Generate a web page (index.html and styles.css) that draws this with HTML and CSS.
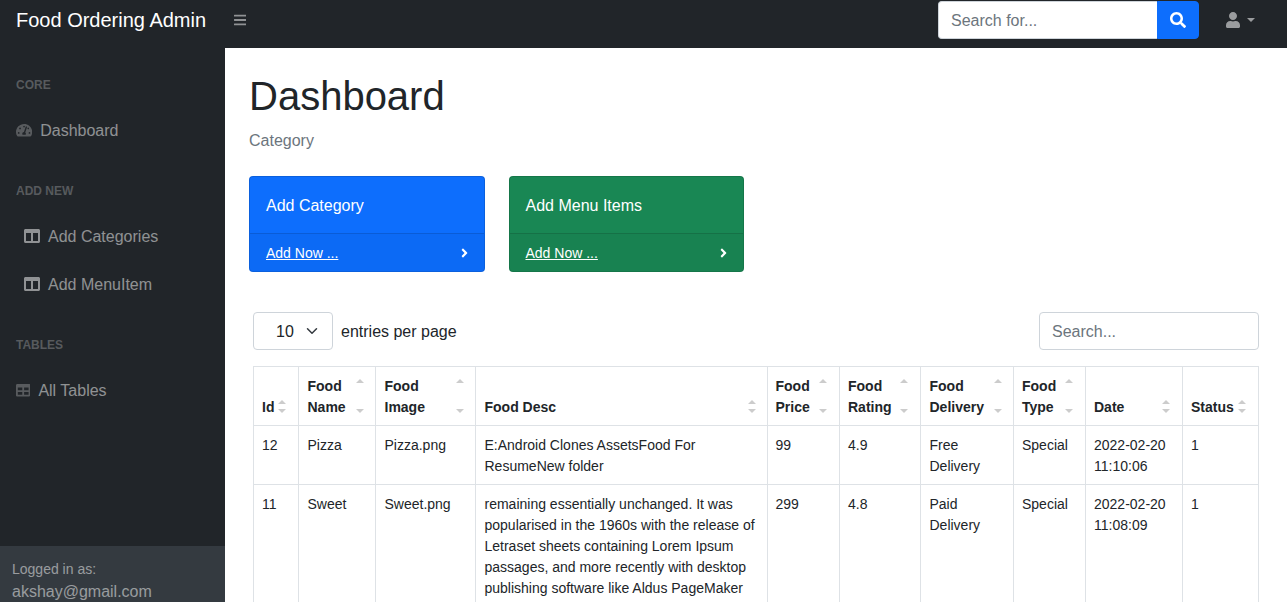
FILE: index.html
```html
<!DOCTYPE html>
<html lang="en">
<head>
<meta charset="utf-8">
<title>Dashboard - Food Ordering Admin</title>
<link rel="stylesheet" href="styles.css">
</head>
<body>
<nav class="topbar">
  <a class="brand" href="#">Food Ordering Admin</a>
  <button class="toggle" type="button" aria-label="Toggle sidebar">
    <svg class="ic-bars" viewBox="0 0 448 512"><path fill="currentColor" d="M16 132h416c8.837 0 16-7.163 16-16V76c0-8.837-7.163-16-16-16H16C7.163 60 0 67.163 0 76v40c0 8.837 7.163 16 16 16zm0 160h416c8.837 0 16-7.163 16-16v-40c0-8.837-7.163-16-16-16H16c-8.837 0-16 7.163-16 16v40c0 8.837 7.163 16 16 16zm0 160h416c8.837 0 16-7.163 16-16v-40c0-8.837-7.163-16-16-16H16c-8.837 0-16 7.163-16 16v40c0 8.837 7.163 16 16 16z"/></svg>
  </button>
  <form class="top-search">
    <input class="top-input" type="text" placeholder="Search for...">
    <button class="top-btn" type="button" aria-label="Search">
      <svg class="ic-search" viewBox="0 0 512 512"><path fill="currentColor" d="M505 442.7L405.3 343c-4.5-4.5-10.6-7-17-7H372c27.6-35.3 44-79.7 44-128C416 93.1 322.9 0 208 0S0 93.1 0 208s93.1 208 208 208c48.3 0 92.7-16.4 128-44v16.3c0 6.4 2.5 12.5 7 17l99.7 99.7c9.4 9.4 24.6 9.4 33.9 0l28.3-28.3c9.4-9.4 9.4-24.6.1-34zM208 336c-70.7 0-128-57.2-128-128 0-70.7 57.2-128 128-128 70.7 0 128 57.2 128 128 0 70.7-57.2 128-128 128z"/></svg>
    </button>
  </form>
  <a class="user" href="#" aria-label="User menu">
    <svg class="ic-user" viewBox="0 0 448 512"><path fill="currentColor" d="M224 256c70.7 0 128-57.3 128-128S294.7 0 224 0 96 57.3 96 128s57.3 128 128 128zm89.6 32h-16.7c-22.2 10.2-46.9 16-72.9 16s-50.6-5.8-72.9-16h-16.7C60.2 288 0 348.2 0 422.4V464c0 26.5 21.5 48 48 48h352c26.5 0 48-21.5 48-48v-41.6c0-74.2-60.2-134.4-134.4-134.4z"/></svg>
    <span class="caret"></span>
  </a>
</nav>
<div class="layout">
  <aside class="sidebar">
    <div class="menu">
      <div class="menu-heading">Core</div>
      <a class="menu-link" href="#">
        <svg class="ic-gauge" viewBox="0 0 576 512"><path fill="currentColor" d="M288 32C128.94 32 0 160.94 0 320c0 52.8 14.25 102.26 39.06 144.8 5.61 9.62 16.3 15.2 27.44 15.2h443c11.14 0 21.83-5.58 27.44-15.2C561.75 422.26 576 372.8 576 320c0-159.06-128.94-288-288-288zm0 64c14.71 0 26.58 10.13 30.32 23.65-1.11 2.26-2.64 4.23-3.45 6.67l-9.22 27.67c-5.13 3.49-10.97 6.01-17.64 6.01-17.67 0-32-14.33-32-32S270.33 96 288 96zM96 384c-17.67 0-32-14.33-32-32s14.33-32 32-32 32 14.33 32 32-14.33 32-32 32zm48-160c-17.67 0-32-14.33-32-32s14.33-32 32-32 32 14.33 32 32-14.33 32-32 32zm246.77-72.41l-61.33 184C343.13 347.33 352 364.54 352 384c0 11.72-3.38 22.55-8.88 32H232.88c-5.5-9.45-8.88-20.28-8.88-32 0-33.94 26.5-61.43 59.9-63.59l61.34-184.01c4.17-12.56 17.73-19.45 30.36-15.17 12.57 4.19 19.35 17.79 15.17 30.36zm14.66 57.2l15.52-46.55c3.47-1.29 7.13-2.23 11.05-2.23 17.67 0 32 14.33 32 32s-14.33 32-32 32c-11.38-.01-20.89-6.28-26.57-15.22zM480 384c-17.67 0-32-14.33-32-32s14.33-32 32-32 32 14.33 32 32-14.33 32-32 32z"/></svg>
        Dashboard
      </a>
      <div class="menu-heading">Add New</div>
      <a class="menu-link menu-sub" href="#">
        <svg class="ic-columns" viewBox="0 0 512 512"><path fill="currentColor" d="M464 32H48C21.49 32 0 53.49 0 80v352c0 26.51 21.49 48 48 48h416c26.51 0 48-21.49 48-48V80c0-26.51-21.49-48-48-48zM224 416H64V160h160v256zm224 0H288V160h160v256z"/></svg>
        Add Categories
      </a>
      <a class="menu-link menu-sub" href="#">
        <svg class="ic-columns" viewBox="0 0 512 512"><path fill="currentColor" d="M464 32H48C21.49 32 0 53.49 0 80v352c0 26.51 21.49 48 48 48h416c26.51 0 48-21.49 48-48V80c0-26.51-21.49-48-48-48zM224 416H64V160h160v256zm224 0H288V160h160v256z"/></svg>
        Add MenuItem
      </a>
      <div class="menu-heading">Tables</div>
      <a class="menu-link" href="#">
        <svg class="ic-table" viewBox="0 0 512 512"><path fill="currentColor" d="M464 32H48C21.49 32 0 53.49 0 80v352c0 26.51 21.49 48 48 48h416c26.51 0 48-21.49 48-48V80c0-26.51-21.49-48-48-48zM224 416H64v-96h160v96zm0-160H64v-96h160v96zm224 160H288v-96h160v96zm0-160H288v-96h160v96z"/></svg>
        All Tables
      </a>
    </div>
    <div class="side-footer">
      <div class="side-small">Logged in as:</div>
      <div>akshay@gmail.com</div>
    </div>
  </aside>
  <main class="content">
    <h1 class="title">Dashboard</h1>
    <div class="crumb">Category</div>
    <div class="cards">
      <div class="card card-blue">
        <div class="card-body">Add Category</div>
        <div class="card-foot">
          <a class="card-link" href="#">Add Now ...</a>
          <svg class="ic-angle" viewBox="0 0 256 512"><path fill="currentColor" d="M224.3 273l-136 136c-9.4 9.4-24.6 9.4-33.9 0l-22.6-22.6c-9.4-9.4-9.4-24.6 0-33.9l96.4-96.4-96.4-96.4c-9.4-9.4-9.4-24.6 0-33.9L54.3 103c9.4-9.4 24.6-9.4 33.9 0l136 136c9.5 9.4 9.5 24.6.1 34z"/></svg>
        </div>
      </div>
      <div class="card card-green">
        <div class="card-body">Add Menu Items</div>
        <div class="card-foot">
          <a class="card-link" href="#">Add Now ...</a>
          <svg class="ic-angle" viewBox="0 0 256 512"><path fill="currentColor" d="M224.3 273l-136 136c-9.4 9.4-24.6 9.4-33.9 0l-22.6-22.6c-9.4-9.4-9.4-24.6 0-33.9l96.4-96.4-96.4-96.4c-9.4-9.4-9.4-24.6 0-33.9L54.3 103c9.4-9.4 24.6-9.4 33.9 0l136 136c9.5 9.4 9.5 24.6.1 34z"/></svg>
        </div>
      </div>
    </div>
    <section class="datatable">
      <div class="dt-top">
        <div class="dt-length">
          <div class="dt-select">
            <span class="dt-text">10</span>
            <svg class="ic-chevron" viewBox="0 0 16 16"><path fill="none" stroke="currentColor" stroke-width="2" stroke-linecap="round" stroke-linejoin="round" d="M2 5l6 6 6-6"/></svg>
          </div>
          <span class="dt-text">entries per page</span>
        </div>
        <input class="dt-search" type="text" placeholder="Search...">
      </div>
      <table class="dt-table">
        <colgroup>
          <col class="c-id"><col class="c-name"><col class="c-image"><col class="c-desc"><col class="c-price">
          <col class="c-rating"><col class="c-delivery"><col class="c-type"><col class="c-date"><col class="c-status">
        </colgroup>
        <thead>
          <tr>
            <th><a class="sorter" href="#">Id</a></th>
            <th class="cell-r"><a class="sorter" href="#">Food Name</a></th>
            <th class="cell-r"><a class="sorter" href="#">Food Image</a></th>
            <th class="cell-r"><a class="sorter" href="#">Food Desc</a></th>
            <th class="cell-l"><a class="sorter" href="#">Food Price</a></th>
            <th><a class="sorter" href="#">Food Rating</a></th>
            <th class="cell-r"><a class="sorter" href="#">Food Delivery</a></th>
            <th><a class="sorter" href="#">Food Type</a></th>
            <th><a class="sorter" href="#">Date</a></th>
            <th><a class="sorter" href="#">Status</a></th>
          </tr>
        </thead>
        <tbody>
          <tr>
            <td>12</td><td class="cell-r">Pizza</td><td class="cell-r">Pizza.png</td>
            <td class="cell-r">E:Android Clones AssetsFood For ResumeNew folder</td>
            <td class="cell-l">99</td><td>4.9</td><td class="cell-r">Free Delivery</td><td>Special</td><td>2022-02-20 11:10:06</td><td>1</td>
          </tr>
          <tr>
            <td>11</td><td class="cell-r">Sweet</td><td class="cell-r">Sweet.png</td>
            <td class="cell-r">remaining essentially unchanged. It was popularised in the 1960s with the release of Letraset sheets containing Lorem Ipsum passages, and more recently with desktop publishing software like Aldus PageMaker including versions of Lorem Ipsum.</td>
            <td class="cell-l">299</td><td>4.8</td><td class="cell-r">Paid Delivery</td><td>Special</td><td>2022-02-20 11:08:09</td><td>1</td>
          </tr>
        </tbody>
      </table>
    </section>
  </main>
</div>
</body>
</html>
```
FILE: styles.css
```css
* { box-sizing: border-box; }
html, body { height: 100%; margin: 0; overflow: hidden; }
body {
  display: flex;
  flex-direction: column;
  font-family: "Liberation Sans", Arial, sans-serif;
  font-size: 16px;
  line-height: 1.5;
  color: #212529;
  background: #fff;
}
a { color: inherit; }
svg { display: block; flex: none; }

/* Top bar */
.topbar {
  flex: none;
  height: 48px;
  padding: 1px 0 9px;
  display: flex;
  align-items: center;
  background: #212529;
}
.brand {
  width: 225px;
  padding: 0 24px 0 16px;
  font-size: 20px;
  line-height: 30px;
  color: #fff;
  text-decoration: none;
  white-space: nowrap;
}
.toggle {
  padding: 4px 8px;
  border: 1px solid transparent;
  background: none;
  color: rgba(255, 255, 255, .5);
  font-size: 14px;
  line-height: 21px;
}
.ic-bars { width: 12.25px; height: 14px; }
.top-search { display: flex; margin-left: auto; }
.top-input {
  width: 219px;
  height: 38px;
  padding: 7px 12px 5px;
  border: 1px solid #ced4da;
  border-right: 0;
  border-radius: 4px 0 0 4px;
  font: inherit;
  color: #212529;
  background: #fff;
  outline: 0;
}
.top-input::placeholder, .dt-search::placeholder { color: #6c757d; opacity: 1; }
.top-btn {
  width: 42px;
  height: 38px;
  display: flex;
  align-items: center;
  justify-content: center;
  padding: 0;
  border: 1px solid #0d6efd;
  border-radius: 0 4px 4px 0;
  background: #0d6efd;
  color: #fff;
}
.ic-search { width: 16px; height: 16px; }
.user {
  display: flex;
  align-items: center;
  margin: 0 32px 0 27px;
  color: rgba(255, 255, 255, .55);
}
.ic-user { width: 14px; height: 16px; }
.caret {
  margin-left: 7px;
  border-top: 4.8px solid currentColor;
  border-left: 4.8px solid transparent;
  border-right: 4.8px solid transparent;
}

/* Layout */
.layout { flex: 1; min-height: 0; display: flex; }

/* Sidebar */
.sidebar {
  flex: none;
  width: 225px;
  display: flex;
  flex-direction: column;
  background: #212529;
  color: rgba(255, 255, 255, .5);
}
.menu { flex: 1; min-height: 0; }
.menu-heading {
  padding: 28px 16px 12px;
  font-size: 12px;
  font-weight: 700;
  line-height: 18px;
  text-transform: uppercase;
  color: rgba(255, 255, 255, .25);
}
.menu-link {
  display: flex;
  align-items: center;
  gap: 8px;
  padding: 13px 16px 11px;
  text-decoration: none;
}
.menu-sub { padding-left: 24px; }
.menu-link svg { margin-top: -2px; color: rgba(255, 255, 255, .25); }
.menu-sub svg { color: rgba(255, 255, 255, .5); }
.ic-gauge { width: 16.2px; height: 14.4px; }
.ic-columns { width: 16px; height: 16px; }
.ic-table { width: 14.4px; height: 14.4px; }
.side-footer {
  flex: none;
  height: 56px;
  padding: 13px 12px 0;
  overflow: hidden;
  background: #343a40;
}
.side-small { font-size: 14px; }

/* Main content */
.content { flex: 1; min-width: 0; padding: 24px 24px 0; }
.title { margin: 0 0 8px; font-size: 40px; font-weight: 500; line-height: 48px; }
.crumb { margin-bottom: 23px; padding-top: 1px; color: #6c757d; }
.cards { display: grid; grid-template-columns: repeat(4, 1fr); gap: 24px; }
.card {
  border: 1px solid rgba(0, 0, 0, .125);
  border-radius: 4px;
  overflow: hidden;
  color: #fff;
}
.card-blue { background: #0d6efd; }
.card-green { background: #198754; }
.card-body { padding: 17px 16px 15px; }
.card-foot {
  display: flex;
  align-items: center;
  justify-content: space-between;
  padding: 9px 16px 7px;
  border-top: 1px solid rgba(0, 0, 0, .125);
  background: rgba(0, 0, 0, .03);
  font-size: 14px;
}
.ic-angle { width: 7px; height: 14px; margin-top: -2px; }

/* Data table */
.datatable { margin-top: 40px; padding: 0 5px 0 4px; }
.dt-top {
  display: flex;
  align-items: center;
  justify-content: space-between;
  margin: 0 -1px 16px 0;
}
.dt-length { display: flex; align-items: center; gap: 8px; }
.dt-text { padding-top: 2px; }
.dt-select {
  width: 80px;
  height: 38px;
  display: flex;
  align-items: center;
  justify-content: space-between;
  padding: 0 12px 0 22px;
  border: 1px solid #ced4da;
  border-radius: 4px;
}
.ic-chevron { width: 16px; height: 12px; color: #343a40; }
.dt-search {
  width: 220px;
  height: 38px;
  padding: 7px 12px 5px;
  border: 1px solid #ced4da;
  border-radius: 4px;
  font: inherit;
  outline: 0;
}
.dt-table {
  width: 100%;
  table-layout: fixed;
  border-collapse: collapse;
  font-size: 14px;
  line-height: 21px;
}
.dt-table th, .dt-table td {
  padding: 9px 8px 7px;
  border: 1px solid #dee2e6;
  text-align: left;
  vertical-align: top;
}
.dt-table th { vertical-align: bottom; }
.dt-table .cell-r { padding-left: 8.5px; padding-right: 7.5px; }
.dt-table .cell-l { padding-left: 7.5px; padding-right: 8.5px; }
.c-id { width: 45px; }
.c-name { width: 77px; }
.c-image { width: 100px; }
.c-desc { width: 292px; }
.c-price { width: 72px; }
.c-rating { width: 81px; }
.c-delivery { width: 93px; }
.c-type { width: 72px; }
.c-date { width: 97px; }
.c-status { width: 76px; }
.sorter {
  position: relative;
  display: block;
  padding-right: 10px;
  color: #212529;
  text-decoration: none;
}
.sorter::before, .sorter::after {
  content: "";
  position: absolute;
  right: 4px;
  width: 0;
  height: 0;
  border-left: 4px solid transparent;
  border-right: 4px solid transparent;
  opacity: .2;
}
.sorter::before { top: 3px; border-bottom: 4px solid #000; }
.sorter::after { bottom: 5px; border-top: 4px solid #000; }
```
